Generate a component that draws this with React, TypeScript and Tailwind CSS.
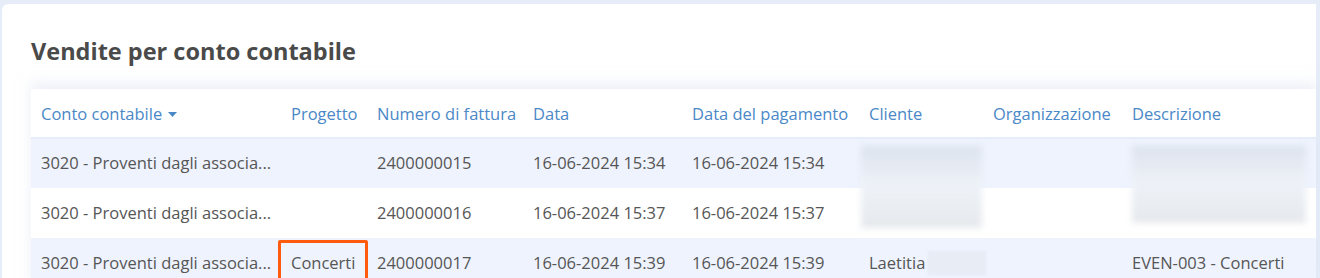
const columns = [
  { label: "Conto contabile", width: "w-[250px]", sort: true },
  { label: "Progetto", width: "w-[86px]" },
  { label: "Numero di fattura", width: "w-[156px]" },
  { label: "Data", width: "w-[159px]" },
  { label: "Data del pagamento", width: "w-[177px]" },
  { label: "Cliente", width: "w-[124px]" },
  { label: "Organizzazione", width: "w-[139px]" },
  { label: "Descrizione", width: "" },
]

const rows = [
  { invoice: "2400000015", date: "16-06-2024 15:34" },
  { invoice: "2400000016", date: "16-06-2024 15:37" },
  { invoice: "2400000017", date: "16-06-2024 15:39" },
]

function Blur({ className }: { className: string }) {
  return (
    <div className={`absolute bg-gradient-to-b from-[#dde3ee] via-[#eef2f8] to-[#e6e9ec] blur-[3px] ${className}`} />
  )
}

export default function App() {
  return (
    <div
      className="h-[278px] w-[1320px] overflow-hidden bg-[#e6edf9] pt-1 pl-[2px] pr-1"
      style={{ fontFamily: '"Open Sans", "Noto Sans", sans-serif' }}
    >
      <div className="h-full rounded-tl-md bg-white pl-[29px]">
        {/* Title */}
        <h2 className="pt-[32px] pb-[23px] text-[23.5px] font-bold leading-[30px] text-[#4a4a4a]">
          Vendite per conto contabile
        </h2>

        {/* Table */}
        <div className="relative shadow-[0_-6px_12px_rgba(220,226,240,0.5)]">
          <table className="w-full table-fixed border-collapse text-[16.5px]">
            <thead>
              <tr className="h-[49px] border-b-2 border-[#e6edf9] text-left">
                {columns.map((c) => (
                  <th key={c.label} className={`${c.width} px-[10px] pt-[2px] font-normal text-[#4a88c7] whitespace-nowrap`}>
                    <span className="inline-flex items-center gap-[6px]">
                      {c.label}
                      {c.sort && (
                        <svg width="9" height="5" viewBox="0 0 9 5">
                          <path d="M0 0h9L4.5 5z" fill="#4a88c7" />
                        </svg>
                      )}
                    </span>
                  </th>
                ))}
              </tr>
            </thead>
            <tbody className="text-[#565656]">
              {rows.map((r, i) => (
                <tr key={r.invoice} className={`h-[50px] ${i % 2 === 0 ? "bg-[#eef3fd]" : "bg-white"}`}>
                  <td className="px-[10px] whitespace-nowrap overflow-hidden">3020 - Proventi dagli associa...</td>
                  <td className="px-[10px]">
                    {i === 2 && (
                      <span className="-ml-[13px] inline-block rounded-[2px] border-[3px] border-[#ff5b0f] px-[10px] py-[10px] leading-[20px]">
                        Concerti
                      </span>
                    )}
                  </td>
                  <td className="px-[10px]">{r.invoice}</td>
                  <td className="px-[10px] whitespace-nowrap">{r.date}</td>
                  <td className="px-[10px] whitespace-nowrap">{r.date}</td>
                  <td className="relative px-[10px]">
                    {i === 2 && (
                      <span className="inline-flex items-center">
                        Laetitia
                        <span className="ml-[3px] inline-block h-6 w-[58px] bg-[#e8ecf5] blur-[1px]" />
                      </span>
                    )}
                  </td>
                  <td className="px-[10px]" />
                  <td className="px-[10px] whitespace-nowrap">{i === 2 && "EVEN-003 - Concerti"}</td>
                </tr>
              ))}
            </tbody>
          </table>
          <Blur className="left-[830px] top-[57px] h-[82px] w-[121px]" />
          <Blur className="left-[1101px] top-[57px] h-[77px] w-[174px]" />
        </div>
      </div>
    </div>
  )
}
